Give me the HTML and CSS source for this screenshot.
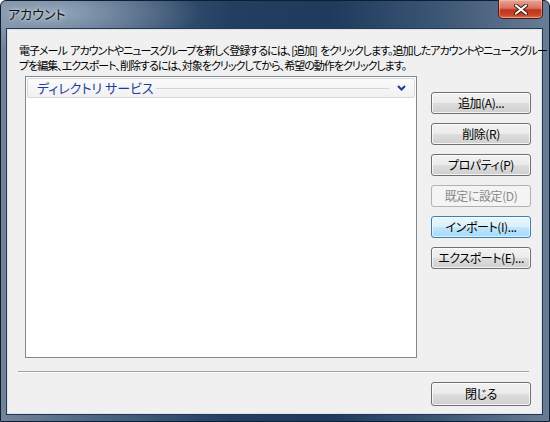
FILE: index.html
```html
<!DOCTYPE html>
<html lang="ja">
<head>
<meta charset="utf-8">
<title>アカウント</title>
<link rel="stylesheet" href="styles.css">
</head>
<body>
<div class="window">
  <div class="titlebar">
    <span class="title">アカウント</span>
    <div class="close-btn">
      <svg width="14" height="11" viewBox="0 0 14 11"><path d="M2 1.5 L12 9.5 M12 1.5 L2 9.5" stroke="#3a1a14" stroke-width="4" stroke-linecap="round"/><path d="M2 1.5 L12 9.5 M12 1.5 L2 9.5" stroke="#ffffff" stroke-width="2.2" stroke-linecap="round"/></svg>
    </div>
  </div>
  <div class="client">
    <p class="desc"><span class="line">電子メール アカウントやニュースグループを新しく登録するには、[追加] をクリックします。追加したアカウントやニュースグルー</span><span class="line">プを編集、エクスポート、削除するには、対象をクリックしてから、希望の動作をクリックします。</span></p>
    <div class="main">
      <div class="listbox">
        <div class="group-header">
          <span class="group-title">ディレクトリ サービス</span>
          <span class="rule"></span>
          <svg class="chev" width="9" height="6" viewBox="0 0 9 6"><path d="M1 1 L4.5 4.5 L8 1" fill="none" stroke="#1e3a8a" stroke-width="2"/></svg>
        </div>
      </div>
      <div class="buttons">
        <button class="btn">追加(A)...</button>
        <button class="btn">削除(R)</button>
        <button class="btn">プロパティ(P)</button>
        <button class="btn disabled">既定に設定(D)</button>
        <button class="btn hot">インポート(I)...</button>
        <button class="btn">エクスポート(E)...</button>
      </div>
    </div>
    <div class="sep"></div>
    <div class="footer">
      <button class="btn">閉じる</button>
    </div>
  </div>
</div>
</body>
</html>
```
FILE: styles.css
```css
* { box-sizing: border-box; }
html, body { margin: 0; padding: 0; background: #ffffff; }
body {
  width: 550px; height: 422px; overflow: hidden;
  font-family: "Noto Sans CJK JP", "Noto Sans", sans-serif;
  font-feature-settings: "palt";
}
.window {
  width: 550px; height: 422px;
  border-radius: 6px 6px 0 0;
  background:
    radial-gradient(ellipse 140px 40px at 60px 12px, rgba(190,205,222,0.55), rgba(190,205,222,0) 100%),
    linear-gradient(90deg, #71849a 0%, #4b6481 18%, #223f61 42%, #1e3a5c 60%, #3c5675 80%, #687d95 100%);
  border: 1px solid #0e1e30;
  display: flex; flex-direction: column;
}
.titlebar {
  height: 28px;
  display: flex; justify-content: space-between; align-items: flex-start;
  padding-left: 7px;
}
.title {
  margin-top: 5px;
  font-size: 13px; line-height: 16px;
  color: #111;
  text-shadow: 0 0 6px rgba(255,255,255,0.7), 0 0 3px rgba(255,255,255,0.6);
}
.close-btn {
  width: 45px; height: 19px;
  margin-right: 6px; margin-top: -1px;
  border: 1px solid #4b1a14;
  border-top: none;
  border-radius: 0 0 5px 5px;
  background: linear-gradient(180deg, #e8a597 0%, #d8725f 45%, #c3331c 55%, #c9452a 85%, #da7a5c 100%);
  box-shadow: inset 0 0 0 1px rgba(255,200,180,0.5);
  display: flex; align-items: center; justify-content: center;
}
.client {
  margin: 0 7px 0 6px;
  height: 385px;
  background: #f0f0f0;
  border: 1px solid #dbe3ec;
  box-shadow: 0 0 0 1px #24384f;
  display: flex; flex-direction: column;
}
.desc {
  margin: 13px 0 0 11px;
  font-size: 11px; line-height: 15px;
  color: #000;
  letter-spacing: -1px;
  word-spacing: 2px;
}
.line { display: block; white-space: nowrap; }
.main {
  margin-top: 3px;
  display: flex; align-items: flex-start;
}
.listbox {
  margin-left: 17px;
  width: 392px; height: 282px;
  background: #fff;
  border: 1px solid #828790;
  padding: 1px;
}
.group-header {
  height: 20px;
  border: 1px solid #d9d9d9;
  border-radius: 2px;
  background: linear-gradient(180deg, #fbfbfb 0%, #f1f1f1 100%);
  display: flex; align-items: center;
  padding: 0 8px 0 9px;
}
.group-title {
  font-size: 13px; line-height: 16px;
  color: #1e3c9a;
  white-space: nowrap;
}
.rule {
  flex: 1;
  height: 1px;
  margin: 0 8px 0 2px;
  background: #c9d6e6;
}
.chev { display: block; }
.buttons {
  margin-left: 14px; margin-top: 16px;
  width: 100px;
  display: flex; flex-direction: column; gap: 9px;
}
.btn {
  width: 100px; height: 22px;
  padding: 0;
  font-family: "Noto Sans CJK JP", "Noto Sans", sans-serif;
  font-feature-settings: "palt";
  font-size: 12px; line-height: 14px;
  letter-spacing: -0.4px;
  color: #000;
  border: 1px solid #707070;
  border-radius: 3px;
  background: linear-gradient(180deg, #f2f2f2 0%, #ebebeb 48%, #dddddd 52%, #cfcfcf 100%);
  box-shadow: inset 0 0 0 1px rgba(255,255,255,0.75);
}
.btn.disabled {
  color: #8a8a8a;
  border-color: #adb2b5;
  background: #f4f4f4;
  box-shadow: none;
}
.btn.hot {
  border-color: #3c7fb1;
  background: linear-gradient(180deg, #eaf6fd 0%, #d9f0fc 48%, #bee6fd 52%, #a7d9f5 100%);
  box-shadow: inset 0 0 0 1px rgba(255,255,255,0.6);
}
.sep {
  margin: 13px 0 0 10px;
  width: 511px;
  height: 2px;
  border-top: 1px solid #a0a0a0;
  border-bottom: 1px solid #ffffff;
}
.footer {
  margin-top: 9px;
  display: flex; justify-content: flex-end;
  padding-right: 10px;
}
.footer .btn { width: 100px; height: 24px; }
```
